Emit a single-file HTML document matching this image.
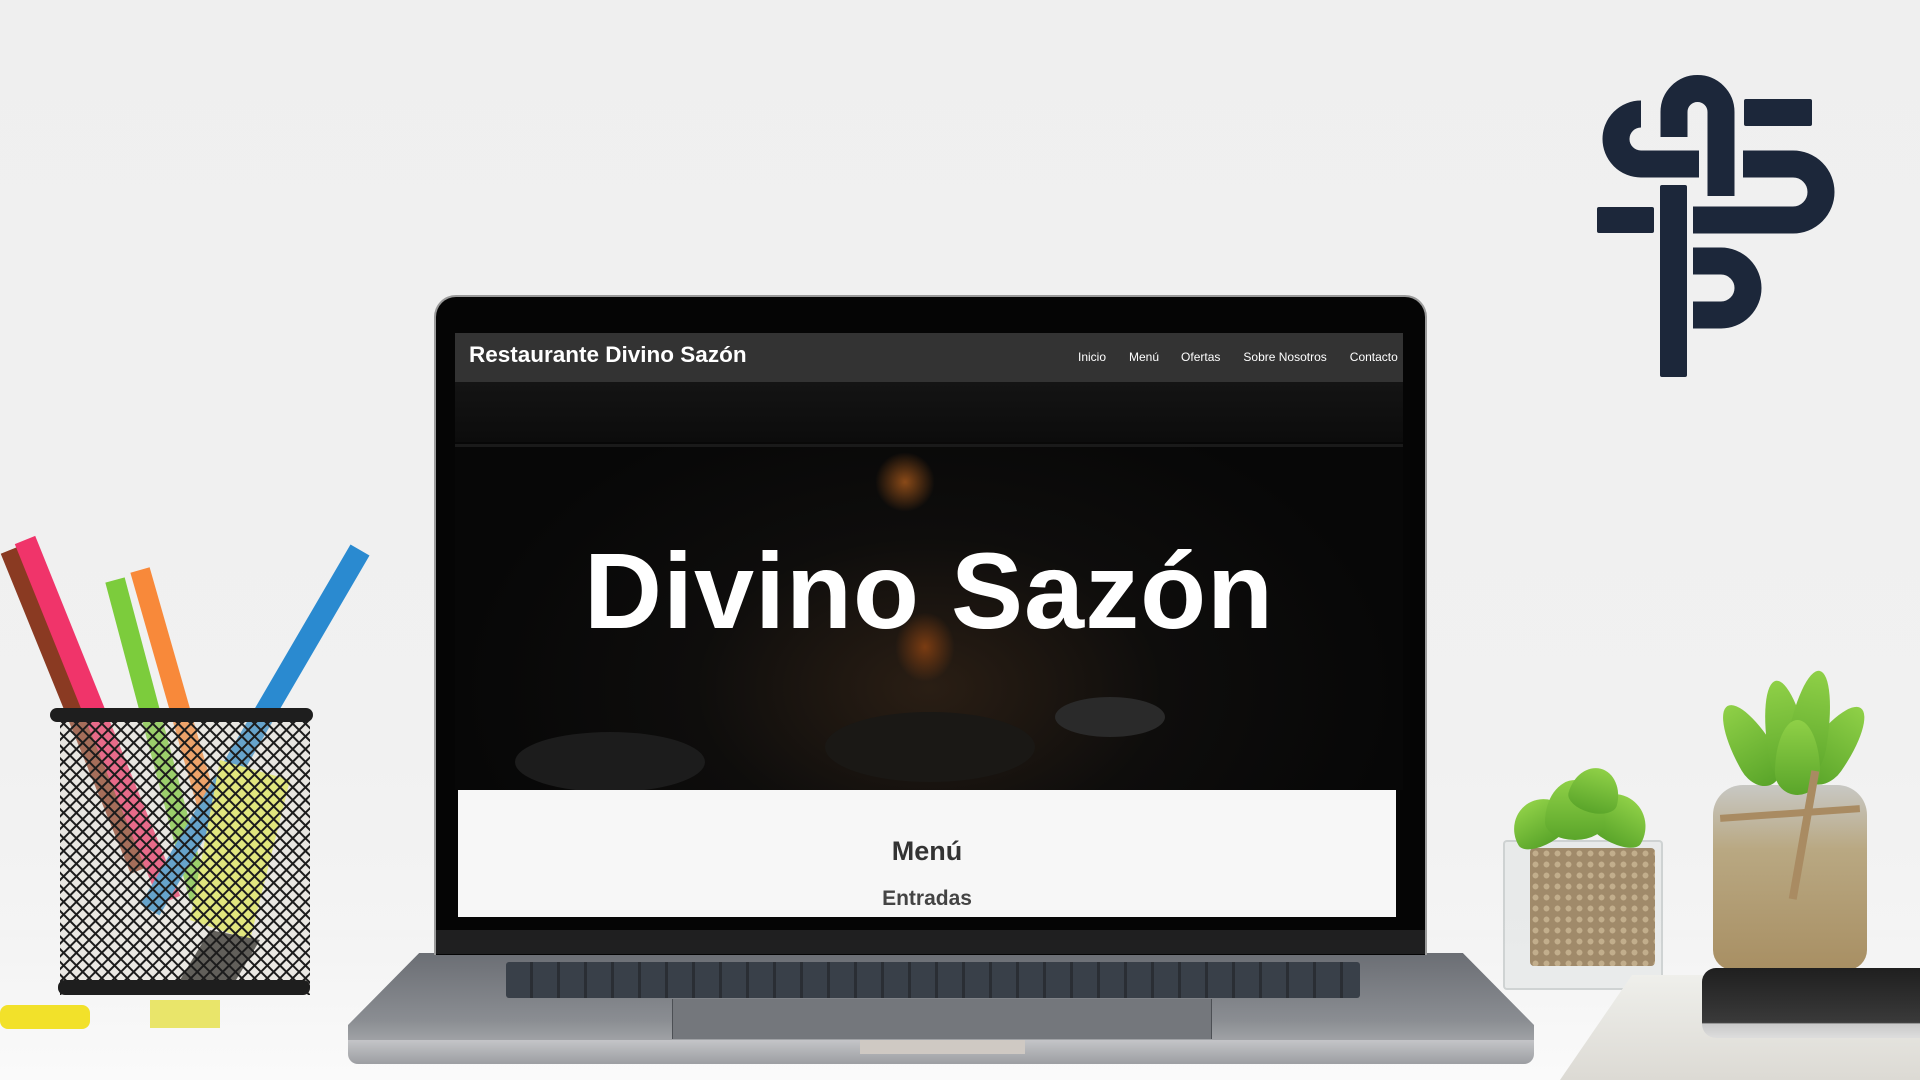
<!DOCTYPE html>
<html><head><meta charset="utf-8"><style>
*{margin:0;padding:0;box-sizing:border-box}
body{width:1920px;height:1080px;overflow:hidden;position:relative;font-family:"Liberation Sans",Arial,sans-serif;background:linear-gradient(#efefef 0%,#f1f1f1 70%,#f6f6f6 100%)}
.abs{position:absolute}
.leaf{position:absolute;border-radius:50% 50% 50% 50%/70% 70% 30% 30%;background:linear-gradient(#8fd047,#5aa52a)}
</style></head><body>
<div class="abs" style="left:0;top:930px;width:1920px;height:150px;background:linear-gradient(#f3f3f3,#fafafa)"></div>

<svg class="abs" style="left:0;top:0" width="1920" height="1080">
<g fill="none" stroke="#1c273a" stroke-width="27">
<path d="M1674,137 V112 A23.5,23.5 0 0 1 1721,112 V196"/>
<path d="M1641,114 A25,25 0 0 0 1641,164 H1699"/>
<path d="M1743,164 H1793 A28,28 0 0 1 1793,220 H1693"/>
<path d="M1693,261 H1721 A27,27 0 0 1 1721,315 H1693"/>
</g>
<g fill="#1c273a">
<rect x="1744" y="99" width="68" height="27" rx="2"/>
<rect x="1597" y="207" width="57" height="26" rx="2"/>
<rect x="1660" y="185" width="27" height="192" rx="2"/>
</g>
</svg>

<div class="abs" style="left:348px;top:953px;width:1186px;height:96px;background:linear-gradient(#6b6e74,#8a8d92 70%,#a9abae);clip-path:polygon(6% 0,94% 0,100% 75%,100% 100%,0 100%,0 75%)"></div>
<div class="abs" style="left:348px;top:1040px;width:1186px;height:24px;background:linear-gradient(#c4c5c8,#9c9ea2);border-radius:0 0 10px 10px"></div>
<div class="abs" style="left:860px;top:1040px;width:165px;height:14px;background:#cfc9c3"></div>
<div class="abs" style="left:506px;top:962px;width:854px;height:36px;background:#2d3138;border-radius:3px;background-image:repeating-linear-gradient(90deg,#394049 0 24px,#2a2e34 24px 27px),repeating-linear-gradient(0deg,transparent 0 7px,#2a2e34 7px 9px)"></div>
<div class="abs" style="left:672px;top:999px;width:540px;height:40px;background:#74777c;border-left:1px solid #4c4f54;border-right:1px solid #4c4f54"></div>

<div class="abs" style="left:434px;top:295px;width:993px;height:660px;background:#050505;border-radius:22px 22px 0 0;border:2px solid #9a9a9a;border-bottom:none"></div>
<div class="abs" style="left:436px;top:930px;width:989px;height:24px;background:#1f1f20"></div>
<div class="abs" style="left:455px;top:333px;width:948px;height:49px;background:#333"></div>
<div class="abs" style="left:469px;top:342px;color:#fff;font-weight:bold;font-size:22.5px">Restaurante Divino Sazón</div>
<div class="abs" style="left:1078px;top:350px;color:#fff;font-size:12px">
<span style="margin-right:23px">Inicio</span><span style="margin-right:22px">Menú</span><span style="margin-right:23px">Ofertas</span><span style="margin-right:23px">Sobre Nosotros</span><span>Contacto</span></div>
<div class="abs" style="left:455px;top:382px;width:948px;height:408px;background:radial-gradient(ellipse at 50% 75%,#2a1e14 0%,#0e0d0c 35%,#070707 70%);overflow:hidden">
<div class="abs" style="left:0;top:0;width:948px;height:60px;background:linear-gradient(#141414,#0c0c0c)"></div>
<div class="abs" style="left:0;top:62px;width:948px;height:3px;background:#1a1a1a"></div>
<div class="abs" style="left:60px;top:350px;width:190px;height:60px;border-radius:50%;background:#1c1c1c"></div>
<div class="abs" style="left:370px;top:330px;width:210px;height:70px;border-radius:50%;background:#1a1815"></div>
<div class="abs" style="left:600px;top:315px;width:110px;height:40px;border-radius:50%;background:#2a2a2a"></div>
<div class="abs" style="left:420px;top:70px;width:60px;height:60px;border-radius:50%;background:radial-gradient(#8a4a18,transparent 70%)"></div>
<div class="abs" style="left:440px;top:230px;width:60px;height:70px;border-radius:50%;background:radial-gradient(#7a3c12,transparent 70%)"></div>
</div>
<div class="abs" style="left:455px;top:528px;width:948px;text-align:center;color:#fff;font-weight:bold;font-size:108px;letter-spacing:1px">Divino Sazón</div>
<div class="abs" style="left:458px;top:790px;width:938px;height:127px;background:#f7f7f7"></div>
<div class="abs" style="left:458px;top:836px;width:938px;text-align:center;color:#333;font-weight:bold;font-size:27px">Menú</div>
<div class="abs" style="left:458px;top:887px;width:938px;text-align:center;color:#444;font-weight:bold;font-size:21px">Entradas</div>

<svg class="abs" style="left:0;top:520px" width="400" height="560">
<defs><pattern id="m" width="9" height="9" patternUnits="userSpaceOnUse" patternTransform="rotate(45)"><rect width="9" height="9" fill="none" stroke="#1c1c1c" stroke-width="2"/></pattern></defs>
<g stroke-linecap="butt">
<line x1="10" y1="30" x2="140" y2="350" stroke="#8a3a22" stroke-width="20"/>
<line x1="25" y1="20" x2="170" y2="380" stroke="#f0346a" stroke-width="22"/>
<line x1="115" y1="60" x2="200" y2="380" stroke="#7ccc3c" stroke-width="20"/>
<line x1="140" y1="50" x2="220" y2="330" stroke="#f8893a" stroke-width="20"/>
<line x1="360" y1="30" x2="150" y2="390" stroke="#2a8ad0" stroke-width="22"/>
</g>
<polygon points="220,240 290,260 250,420 190,400" fill="#e6f25a"/>
<polygon points="210,410 260,420 230,470 180,460" fill="#222"/>
<rect x="60" y="195" width="250" height="280" fill="#d8d2c4" opacity=".35"/>
<rect x="60" y="195" width="250" height="280" fill="url(#m)"/>
<rect x="50" y="188" width="263" height="14" rx="7" fill="#1e1e1e"/>
<rect x="58" y="460" width="252" height="15" rx="7" fill="#1e1e1e"/>
<rect x="0" y="485" width="90" height="24" rx="8" fill="#f2e12a"/>
<rect x="150" y="480" width="70" height="28" fill="#e9e56a"/>
</svg>

<!-- plants -->
<div class="abs" style="left:1503px;top:840px;width:160px;height:150px;background:rgba(225,228,228,.6);border:2px solid rgba(200,205,205,.8);border-radius:4px"></div>
<div class="abs" style="left:1530px;top:848px;width:125px;height:118px;background:radial-gradient(circle,#c2ae8c 35%,#a08a6a 40%) 0 0/11px 11px;border-radius:4px"></div>
<div class="leaf" style="left:1510px;top:800px;width:60px;height:45px;transform:rotate(-30deg)"></div>
<div class="leaf" style="left:1585px;top:795px;width:65px;height:48px;transform:rotate(30deg)"></div>
<div class="leaf" style="left:1545px;top:780px;width:60px;height:60px"></div>
<div class="leaf" style="left:1570px;top:768px;width:50px;height:45px;transform:rotate(15deg)"></div>
<div class="abs" style="left:1713px;top:785px;width:154px;height:185px;background:linear-gradient(#c8c8c4,#b9a882 35%,#a88f63);border-radius:30px 30px 20px 20px"></div>
<div class="leaf" style="left:1730px;top:700px;width:40px;height:90px;transform:rotate(-30deg)"></div>
<div class="leaf" style="left:1815px;top:700px;width:40px;height:90px;transform:rotate(35deg)"></div>
<div class="leaf" style="left:1765px;top:680px;width:40px;height:105px;transform:rotate(-10deg)"></div>
<div class="leaf" style="left:1790px;top:670px;width:40px;height:110px;transform:rotate(10deg)"></div>
<div class="leaf" style="left:1775px;top:720px;width:45px;height:75px"></div>
<div class="abs" style="left:1720px;top:810px;width:140px;height:7px;background:#a98b62;transform:rotate(-4deg)"></div>
<div class="abs" style="left:1800px;top:770px;width:8px;height:130px;background:#a98b62;transform:rotate(10deg)"></div>

<!-- notebook & phone -->
<div class="abs" style="left:1560px;top:975px;width:360px;height:105px;background:linear-gradient(#efefeb,#dcdad4);clip-path:polygon(20% 0,100% 0,100% 100%,0 100%)"></div>
<div class="abs" style="left:1702px;top:968px;width:218px;height:70px;background:linear-gradient(#1f1f1f,#3a3a3a 78%,#c9c9c9 80%,#ddd);border-radius:14px 0 0 14px"></div>
</body></html>
